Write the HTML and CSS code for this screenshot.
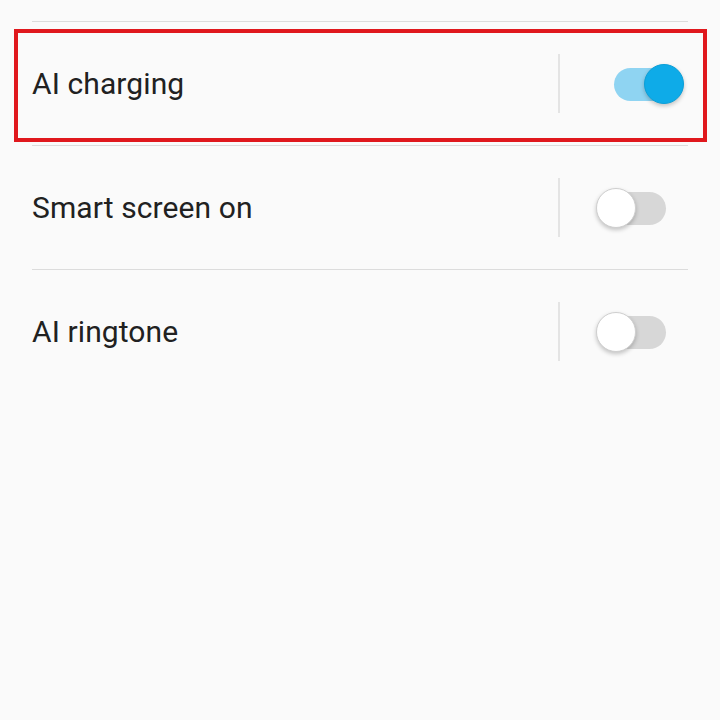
FILE: index.html
```html
<!DOCTYPE html>
<html lang="en">
<head>
    <meta charset="UTF-8">
    <meta name="viewport" content="width=device-width, initial-scale=1.0">
    <title>Smart assistance</title>
    <link rel="stylesheet" href="styles.css">
</head>
<body>
    <div class="settings-list">
        <div class="setting-row highlighted">
            <span class="setting-label">AI charging</span>
            <span class="setting-divider"></span>
            <span class="switch on"><span class="track"></span><span class="knob"></span></span>
        </div>
        <div class="setting-row">
            <span class="setting-label">Smart screen on</span>
            <span class="setting-divider"></span>
            <span class="switch"><span class="track"></span><span class="knob"></span></span>
        </div>
        <div class="setting-row">
            <span class="setting-label">AI ringtone</span>
            <span class="setting-divider"></span>
            <span class="switch"><span class="track"></span><span class="knob"></span></span>
        </div>
    </div>
</body>
</html>
```

FILE: styles.css
```css
html, body {
    margin: 0;
    height: 100%;
    background-color: #fafafa;
}
body {
    font-family: Roboto, "Noto Sans", sans-serif;
    color: #212121;
}
.settings-list {
    padding: 21px 32px 0 32px;
}
.setting-row {
    position: relative;
    display: flex;
    align-items: center;
    height: 123px;
    border-top: 1px solid #dcdcdc;
}
.setting-label {
    flex: 1;
    font-size: 30px;
    letter-spacing: 0.1px;
}
.setting-divider {
    width: 2px;
    height: 59px;
    background-color: #e4e4e4;
}
.switch {
    position: relative;
    width: 88px;
    height: 42px;
    margin-left: 36px;
    margin-right: 4px;
}
.track {
    position: absolute;
    left: 2px;
    top: 5px;
    width: 68px;
    height: 33px;
    border-radius: 17px;
    background-color: #d7d7d7;
}
.knob {
    position: absolute;
    left: 0;
    top: 1px;
    width: 38px;
    height: 38px;
    border-radius: 50%;
    background-color: #ffffff;
    border: 1px solid #cfcfcf;
    box-shadow: 0 2px 4px rgba(0, 0, 0, 0.22);
}
.switch.on .track {
    left: 18px;
    width: 60px;
    background-color: #8fd4f2;
}
.switch.on .knob {
    left: 48px;
    background-color: #0eabe8;
    border-color: #0b9fd8;
}
.highlighted::after {
    content: "";
    position: absolute;
    left: -18px;
    right: -19px;
    top: 7px;
    bottom: 3px;
    border: 4px solid #e0181d;
}
```
